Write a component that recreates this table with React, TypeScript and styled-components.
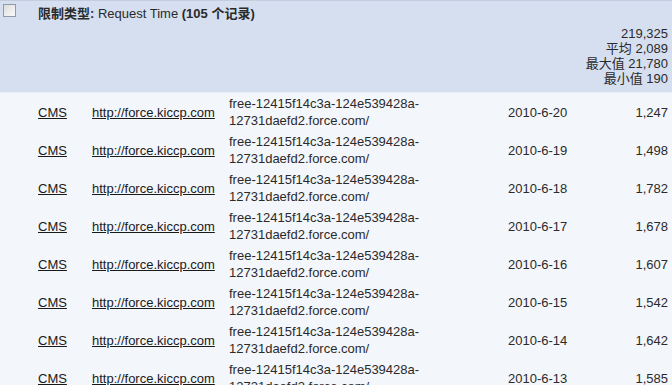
import React from "react";
import styled, { createGlobalStyle } from "styled-components";

const Global = createGlobalStyle`
  html, body { margin: 0; padding: 0; background: #f3f6fb; }
  body { font-family: Arial, "Liberation Sans", "Noto Sans CJK SC", sans-serif; font-size: 13px; color: #222; }
`;

const Wrap = styled.div`
  width: 672px;
  height: 385px;
  overflow: hidden;
  background: #f3f6fb;
`;

const Header = styled.div`
  display: grid;
  grid-template-columns: 38px 1fr;
  background: #d5dff0;
  border-top: 1px solid #c3cde0;
  border-bottom: 1px solid #e6ecf6;
  height: 93px;
  box-sizing: border-box;
  padding-right: 4px;
`;

const Check = styled.span`
  display: block;
  width: 11px;
  height: 11px;
  margin: 3px 0 0 3px;
  border: 1px solid #8f9aab;
  background: linear-gradient(135deg, #dcdcdc, #fbfbfb);
`;

const HeadMain = styled.div`
  display: flex;
  flex-direction: column;
`;

const Title = styled.div`
  line-height: 17px;
  padding-top: 4px;
  color: #2a2a2a;
  b { font-weight: bold; }
`;

const Stats = styled.div`
  display: flex;
  flex-direction: column;
  align-items: flex-end;
  line-height: 15px;
  margin-top: 4px;
  color: #2a2a2a;
`;

const Row = styled.div`
  display: grid;
  grid-template-columns: 38px 54px 137px 279px 1fr auto;
  align-items: center;
  height: 38px;
  padding-right: 4px;
`;

const Link = styled.span`
  text-decoration: underline;
  color: #1a1a1a;
  white-space: nowrap;
`;

const Domain = styled.span`
  line-height: 17px;
  color: #2a2a2a;
`;

const Cell = styled.span`
  color: #2a2a2a;
`;

const Num = styled.span`
  color: #2a2a2a;
  text-align: right;
`;

const rows = [
  ["2010-6-20", "1,247"],
  ["2010-6-19", "1,498"],
  ["2010-6-18", "1,782"],
  ["2010-6-17", "1,678"],
  ["2010-6-16", "1,607"],
  ["2010-6-15", "1,542"],
  ["2010-6-14", "1,642"],
  ["2010-6-13", "1,585"],
];

export default function App() {
  return (
    <Wrap>
      <Global />
      <Header>
        <Check />
        <HeadMain>
          <Title>
            <b>限制类型:</b> Request Time <b>(105 个记录)</b>
          </Title>
          <Stats>
            <span>219,325</span>
            <span>平均 2,089</span>
            <span>最大值 21,780</span>
            <span>最小值 190</span>
          </Stats>
        </HeadMain>
      </Header>
      {rows.map(([d, n]) => (
        <Row key={d}>
          <span />
          <Link>CMS</Link>
          <Link>http://force.kiccp.com</Link>
          <Domain>
            free-12415f14c3a-124e539428a-
            <br />
            12731daefd2.force.com/
          </Domain>
          <Cell>{d}</Cell>
          <Num>{n}</Num>
        </Row>
      ))}
    </Wrap>
  );
}
